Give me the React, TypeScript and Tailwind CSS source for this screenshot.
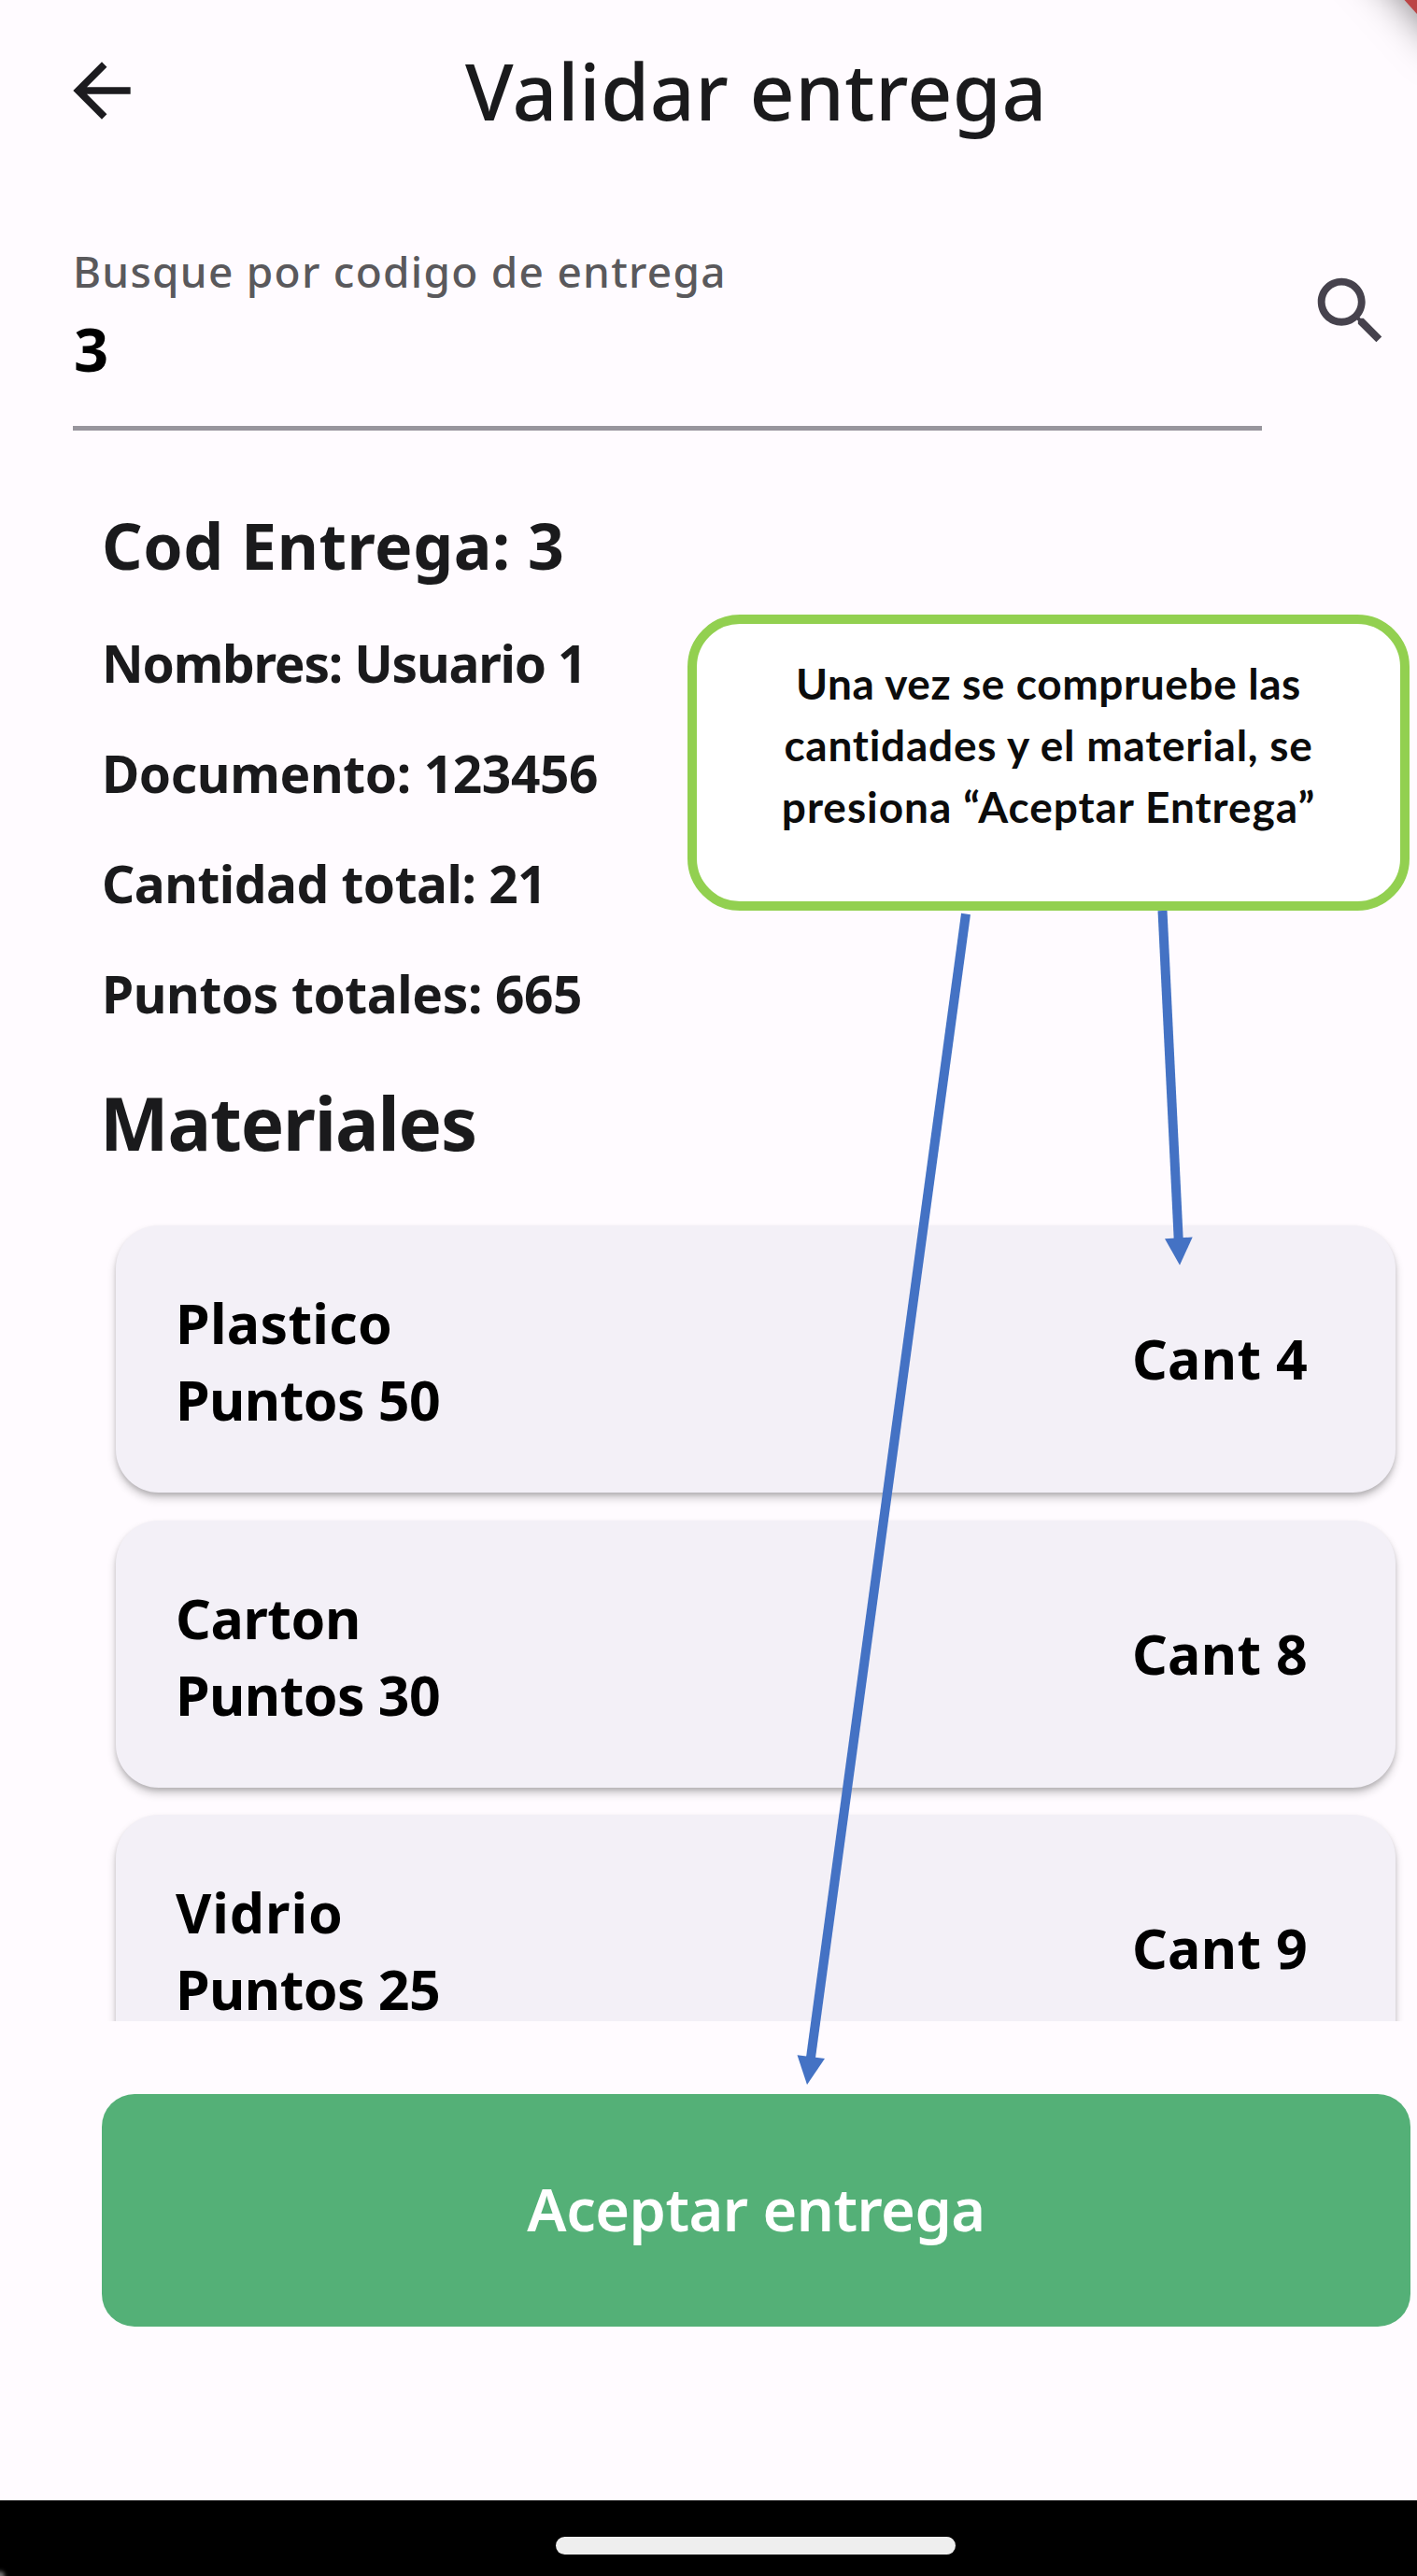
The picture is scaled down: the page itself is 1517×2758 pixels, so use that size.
const details = [
  { text: 'Nombres: Usuario 1', spacing: 'tracking-[-1.22px]' },
  { text: 'Documento: 123456', spacing: 'tracking-[-0.39px]' },
  { text: 'Cantidad total: 21', spacing: 'tracking-[-0.51px]' },
  { text: 'Puntos totales: 665', spacing: 'tracking-[-0.41px]' },
];

const materials = [
  { name: 'Plastico', points: 50, count: 4, spacing: 'tracking-[0.3px]' },
  { name: 'Carton', points: 30, count: 8, spacing: 'tracking-[-0.41px]' },
  { name: 'Vidrio', points: 25, count: 9, spacing: 'tracking-[0.94px]' },
];

function Header() {
  return (
    <header className="flex h-[191px] items-center pl-[63px]">
      <svg viewBox="0 0 24 24" className="mt-0.5 size-[92px] shrink-0 fill-[#1c1b1f]">
        <path d="M20 11H7.83l5.59-5.59L12 4l-8 8 8 8 1.41-1.41L7.83 13H20v-2z" />
      </svg>
      <h1 className="mt-0.5 ml-[343px] text-[84px] leading-[100px] font-medium tracking-[0.45px] whitespace-nowrap">
        Validar entrega
      </h1>
    </header>
  );
}

function SearchField() {
  return (
    <div className="flex h-[270px] items-start pl-[78px]">
      <div className="flex h-[270px] w-[1273px] flex-col border-b-[5px] border-[#98959d] pt-[69px]">
        <label className="text-[46px] leading-[60px] font-medium tracking-[1.25px] whitespace-nowrap text-[#5a595c]">
          Busque por codigo de entrega
        </label>
        <span className="mt-[13px] pl-px text-[65px] leading-[80px] font-bold text-black">3</span>
      </div>
      <svg viewBox="0 0 24 24" className="mt-[95px] ml-[48px] size-[94px] shrink-0 fill-[#46424d]">
        <path d="M15.5 14h-.79l-.28-.27C15.41 12.59 16 11.11 16 9.5 16 5.91 13.09 3 9.5 3S3 5.91 3 9.5 5.91 16 9.5 16c1.61 0 3.09-.59 4.23-1.57l.27.28v.79l5 4.99L20.49 19l-4.99-5zm-6 0C7.01 14 5 11.99 5 9.5S7.01 5 9.5 5 14 7.01 14 9.5 11.99 14 9.5 14z" />
      </svg>
    </div>
  );
}

function Callout() {
  return (
    <>
      <div className="absolute top-[658px] left-[736px] h-[317px] w-[773px] rounded-[56px] border-[10px] border-[#92d050] bg-white pt-[31px] text-center font-['Lato',sans-serif] text-[46px] leading-[66px] font-bold whitespace-nowrap text-[#0c0c0c]">
        <p className="tracking-[0.6px]">Una vez se compruebe las</p>
        <p className="tracking-[0.75px]">cantidades y el material, se</p>
        <p className="tracking-[0.95px]">presiona “Aceptar Entrega”</p>
      </div>
      <svg
        viewBox="0 0 460 1264"
        className="pointer-events-none absolute top-[975px] left-[840px] h-[1264px] w-[460px] fill-[#4472c4] stroke-[#4472c4]"
      >
        <line x1="194" y1="3.5" x2="28" y2="1228" strokeWidth="10" />
        <path d="M13.5 1225.3L43 1229L24 1257z" stroke="none" />
        <line x1="404.5" y1="0" x2="421.7" y2="352" strokeWidth="10" />
        <path d="M407 351.2L436.7 349.5L423 379.5z" stroke="none" />
      </svg>
    </>
  );
}

export default function App() {
  return (
    <div className="relative flex h-[2758px] w-[1517px] flex-col overflow-hidden bg-[#fffbff] font-['Noto_Sans',sans-serif] text-[#1a1a1c]">
      <Header />
      <SearchField />

      <section className="mt-[78px] pl-[109px] font-bold whitespace-nowrap">
        <h2 className="text-[68px] leading-[90px] tracking-[0.55px]">Cod Entrega: 3</h2>
        <div className="mt-[22px] text-[55px] leading-[118px]">
          {details.map((d) => (
            <p key={d.text} className={d.spacing}>
              {d.text}
            </p>
          ))}
        </div>
        <h2 className="mt-[29px] -ml-[2px] text-[78px] leading-[100px] tracking-[-1.16px]">Materiales</h2>
      </section>

      <section className="flex h-[912px] flex-col gap-[29.5px] overflow-hidden px-[124px] pt-[60px]">
        {materials.map((m) => (
          <div
            key={m.name}
            className="flex h-[286px] w-[1370px] shrink-0 items-center justify-between rounded-[46px] bg-[#f3f0f7] pr-[94px] pl-[64px] text-[59px] leading-[82px] font-bold whitespace-nowrap text-black shadow-[0_6px_10px_rgba(0,0,0,0.2),0_3px_4px_rgba(0,0,0,0.12)]"
          >
            <div className="pt-1">
              <p className={m.spacing}>{m.name}</p>
              <p className="tracking-[-0.57px]">Puntos {m.points}</p>
            </div>
            <p className="-mt-0.5 tracking-[0.3px]">Cant {m.count}</p>
          </div>
        ))}
      </section>

      <button className="mt-[78px] ml-[109px] h-[249px] w-[1401px] shrink-0 rounded-[35px] bg-[#54b077] pb-0.5 text-[63px] font-semibold tracking-[-0.53px] text-white">
        Aceptar entrega
      </button>

      <div className="mt-auto flex h-[81px] shrink-0 justify-center bg-black pt-[39px] pl-[101px]">
        <div className="h-[19px] w-[428px] rounded-full bg-[#eeeeee]" />
      </div>

      <Callout />

      <div className="absolute -top-[71px] -right-[90px] h-[60px] w-[200px] rotate-[48deg] bg-[#bb4545] shadow-[0_0_44px_rgba(0,0,0,0.5)]" />
      <div className="absolute -bottom-[5px] -left-[5px] size-[10px] rounded-full bg-[#777777] blur-[2px]" />
    </div>
  );
}
